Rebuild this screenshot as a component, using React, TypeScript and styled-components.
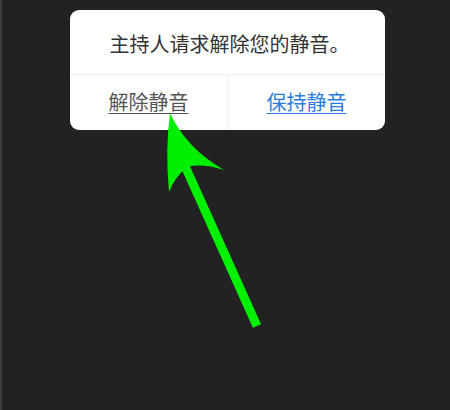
import React from "react";
import styled, { createGlobalStyle } from "styled-components";

const Global = createGlobalStyle`
  html, body { margin: 0; padding: 0; background: #222222; }
  body { font-family: "Noto Sans CJK SC", "Noto Sans", sans-serif; }
`;

const Page = styled.div`
  position: relative;
  width: 450px;
  height: 410px;
  box-sizing: border-box;
  background: #222222;
  border-left: 2px solid #3d3d3d;
  padding: 10px 0 0 68px;
  overflow: hidden;
`;

const Dialog = styled.div`
  width: 315px;
  background: #ffffff;
  border-radius: 9px;
  display: flex;
  flex-direction: column;
  overflow: hidden;
`;

const Message = styled.div`
  height: 65px;
  display: flex;
  align-items: center;
  justify-content: center;
  font-size: 20px;
  color: #333333;
  padding: 2px 0 0 4px;
  box-sizing: border-box;
  border-bottom: 1px solid #f0f0f0;
`;

const Actions = styled.div`
  height: 55px;
  display: grid;
  grid-template-columns: 158px 1fr;
`;

const Action = styled.button<{ $primary?: boolean; $divider?: boolean }>`
  border: none;
  background: transparent;
  font-family: inherit;
  font-size: 20px;
  padding: 0 0 2px;
  color: ${(p) => (p.$primary ? "#2a7be0" : "#555555")};
  text-decoration: underline;
  text-underline-offset: 3px;
  text-decoration-thickness: 1px;
  border-right: ${(p) => (p.$divider ? "1px solid #f0f0f0" : "none")};
  cursor: pointer;
`;

const Overlay = styled.svg`
  position: absolute;
  left: 0;
  top: 0;
  pointer-events: none;
`;

export default function App() {
  return (
    <>
      <Global />
      <Page>
        <Dialog>
          <Message>主持人请求解除您的静音。</Message>
          <Actions>
            <Action $divider>解除静音</Action>
            <Action $primary>保持静音</Action>
          </Actions>
        </Dialog>
        <Overlay width="450" height="410" viewBox="0 0 450 410">
          <line x1="183" y1="166" x2="255" y2="326" stroke="#00f000" strokeWidth="9" />
          <path
            d="M168,113 Q184,148 222,170 Q200,163 185,167 Q172,178 167,192 Q163,150 168,113 Z"
            fill="#00f000"
          />
        </Overlay>
      </Page>
    </>
  );
}
